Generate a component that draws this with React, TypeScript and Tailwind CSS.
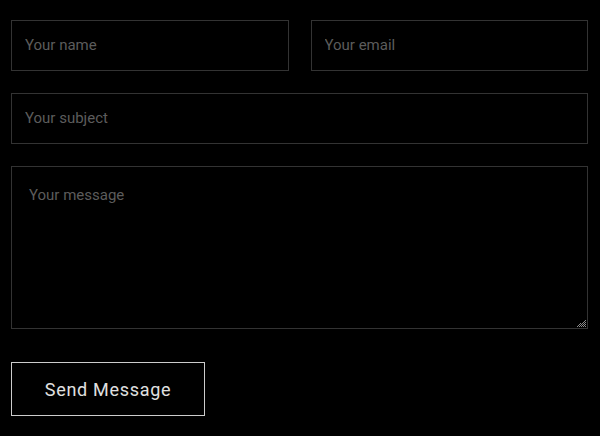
import React from "react";

function Grip() {
  const dots: { x: number; y: number }[] = [];
  for (let y = 0; y < 8; y++) {
    for (let x = 0; x < 10; x++) {
      if (x + y * 1.25 >= 9 && (x + y) % 2 === 0) dots.push({ x, y });
    }
  }
  return (
    <svg
      className="absolute right-[2px] bottom-[2px] pointer-events-none"
      width="10"
      height="8"
      viewBox="0 0 10 8"
    >
      {dots.map((d, i) => (
        <rect key={i} x={d.x} y={d.y} width="1" height="1" fill="#8a8a8a" />
      ))}
    </svg>
  );
}

export default function App() {
  const field =
    "w-full h-[51px] bg-black border border-[#333333] px-[13px] pb-[2px] text-[15px] text-[#cccccc] placeholder:text-[#5c5c5c] outline-none";
  return (
    <div
      className="w-[600px] h-[436px] bg-black px-[11px] pt-[20px]"
      style={{ fontFamily: "Roboto, 'Noto Sans', sans-serif" }}
    >
      <form className="flex flex-col gap-[22px] w-[577px]" onSubmit={(e) => e.preventDefault()}>
        <div className="flex gap-[22px]">
          <input className={field} placeholder="Your name" />
          <input className={field} placeholder="Your email" />
        </div>
        <input className={field} placeholder="Your subject" />
        <div className="relative w-[577px] h-[163px]">
          <textarea
            className="block w-full h-full resize-none bg-black border border-[#333333] px-[17px] pt-[17px] pb-[16px] text-[15px] text-[#cccccc] placeholder:text-[#5c5c5c] outline-none"
            placeholder="Your message"
          />
          <Grip />
        </div>
        <div className="pt-[11px]">
          <button
            type="submit"
            className="w-[194px] h-[54px] border border-[#cccccc] bg-black text-[18px] tracking-[0.7px] text-[#e0e0e0]"
          >
            Send Message
          </button>
        </div>
      </form>
    </div>
  );
}
